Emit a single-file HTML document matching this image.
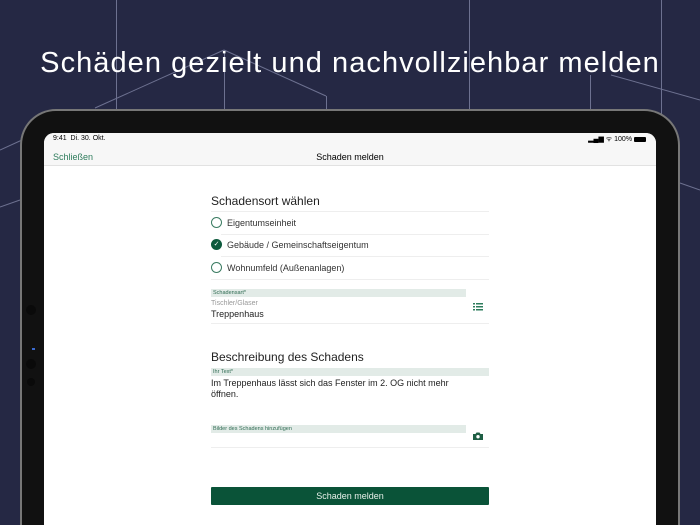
<!DOCTYPE html>
<html><head><meta charset="utf-8"><style>
*{margin:0;padding:0;box-sizing:border-box}
html,body{width:700px;height:525px;overflow:hidden}
body{background:#252844;font-family:"Liberation Sans",sans-serif;position:relative}
.a{position:absolute}
.t{white-space:nowrap}
</style></head><body>
<svg class="a" style="left:0;top:0" width="700" height="525">
<g stroke="#6d7190" stroke-width="1" fill="none">
<line x1="116.5" y1="0" x2="116.5" y2="110"/>
<line x1="469.5" y1="0" x2="469.5" y2="110"/>
<line x1="661.5" y1="0" x2="661.5" y2="200"/>
<line x1="224.5" y1="50" x2="224.5" y2="110"/>
<line x1="224" y1="50" x2="326" y2="96"/>
<line x1="326.5" y1="96" x2="326.5" y2="110"/>
<line x1="224" y1="50" x2="95" y2="108"/>
<line x1="590.5" y1="75" x2="590.5" y2="110"/>
<line x1="611" y1="75" x2="700" y2="100"/>
<line x1="680" y1="183" x2="700" y2="190"/>
<line x1="0" y1="150" x2="22" y2="140"/>
<line x1="0" y1="207" x2="20" y2="200"/>
</g></svg>
<div class="a t" style="left:0;width:700px;text-align:center;top:47px;color:#fff;font-size:29px;letter-spacing:1.05px">Schäden gezielt und nachvollziehbar melden</div>
<div class="a" style="left:20px;top:109px;width:660px;height:416px;background:#111;border:2px solid #777;border-bottom:none;border-radius:36px 36px 0 0"></div>
<div class="a" style="left:32px;top:348px;width:3px;height:2px;background:#3a6ad0"></div>
<div class="a" style="left:26px;top:305px;width:10px;height:10px;border-radius:50%;background:#0a0a0a"></div>
<div class="a" style="left:26px;top:359px;width:10px;height:10px;border-radius:50%;background:#0a0a0a"></div>
<div class="a" style="left:27px;top:378px;width:8px;height:8px;border-radius:50%;background:#0a0a0a"></div>
<div class="a" style="left:44px;top:133px;width:612px;height:392px;background:#fff;border-radius:10px 10px 0 0;overflow:hidden">
 <div class="a" style="left:0;top:0;width:612px;height:33px;background:#f7f7f7;border-bottom:1px solid #e2e2e2"></div>
 <div class="a t" style="left:9px;top:2px;font-size:7px;color:#000">9:41&nbsp; Di. 30. Okt.</div>
 <div class="a t" style="right:10px;top:2px;font-size:7px;color:#000">▂▄▆ ᯤ 100% <span style="display:inline-block;width:12px;height:5px;background:#000;border-radius:1px;vertical-align:middle"></span></div>
 <div class="a t" style="left:9px;top:19px;font-size:9px;color:#2e7c5c">Schließen</div>
 <div class="a t" style="left:0;width:612px;text-align:center;top:19px;font-size:9px;color:#000">Schaden melden</div>
</div>
<div class="a t" style="left:211px;top:194px;font-size:12px;color:#222">Schadensort wählen</div>
<div class="a" style="left:211px;top:211px;width:278px;height:1px;background:#eee"></div>
<div class="a" style="left:221px;top:234px;width:268px;height:1px;background:#eee"></div>
<div class="a" style="left:221px;top:256px;width:268px;height:1px;background:#eee"></div>
<div class="a" style="left:211px;top:279px;width:278px;height:1px;background:#eee"></div>
<div class="a" style="left:211px;top:217px;width:11px;height:11px;border:1.3px solid #3b7c62;border-radius:50%"></div>
<div class="a" style="left:211px;top:239px;width:11px;height:11px;background:#0d5a3d;border-radius:50%;color:#fff;font-size:7px;text-align:center;line-height:11px">✓</div>
<div class="a" style="left:211px;top:262px;width:11px;height:11px;border:1.3px solid #3b7c62;border-radius:50%"></div>
<div class="a t" style="left:227px;top:218px;font-size:9px;color:#333">Eigentumseinheit</div>
<div class="a t" style="left:227px;top:240px;font-size:9px;color:#333">Gebäude / Gemeinschaftseigentum</div>
<div class="a t" style="left:227px;top:263px;font-size:9px;color:#333">Wohnumfeld (Außenanlagen)</div>
<div class="a t" style="left:211px;top:289px;width:255px;height:8px;background:#e2ebe7;font-size:5.5px;color:#2e6b52;padding-left:2px;line-height:8px">Schadensart*</div>
<div class="a t" style="left:211px;top:300px;font-size:7px;color:#999">Tischler/Glaser</div>
<div class="a t" style="left:211px;top:309px;font-size:9px;color:#222">Treppenhaus</div>
<svg class="a" style="left:473px;top:303px" width="10" height="8"><g fill="#2e7c5c"><rect x="0" y="0" width="2" height="1.5"/><rect x="3" y="0" width="7" height="1.5"/><rect x="0" y="3" width="2" height="1.5"/><rect x="3" y="3" width="7" height="1.5"/><rect x="0" y="6" width="2" height="1.5"/><rect x="3" y="6" width="7" height="1.5"/></g></svg>
<div class="a" style="left:211px;top:323px;width:278px;height:1px;background:#eee"></div>
<div class="a t" style="left:211px;top:350px;font-size:12px;color:#222">Beschreibung des Schadens</div>
<div class="a t" style="left:211px;top:368px;width:278px;height:8px;background:#e2ebe7;font-size:5.5px;color:#2e6b52;padding-left:2px;line-height:8px">Ihr Text*</div>
<div class="a" style="left:211px;top:378px;font-size:9px;color:#222;line-height:11px">Im Treppenhaus lässt sich das Fenster im 2. OG nicht mehr<br>öffnen.</div>
<div class="a t" style="left:211px;top:425px;width:255px;height:8px;background:#e2ebe7;font-size:5.5px;color:#2e6b52;padding-left:2px;line-height:8px">Bilder des Schadens hinzufügen</div>
<svg class="a" style="left:473px;top:432px" width="10" height="8"><path d="M0 2h2.5l1-1.5h3l1 1.5H10v6H0z" fill="#1e5e44"/><circle cx="5" cy="4.7" r="1.7" fill="#fff"/></svg>
<div class="a" style="left:211px;top:447px;width:278px;height:1px;background:#eee"></div>
<div class="a t" style="left:211px;top:487px;width:278px;height:18px;background:#0a5338;border-radius:1px;color:#e6efe9;font-size:9px;text-align:center;line-height:18px">Schaden melden</div>
</body></html>
